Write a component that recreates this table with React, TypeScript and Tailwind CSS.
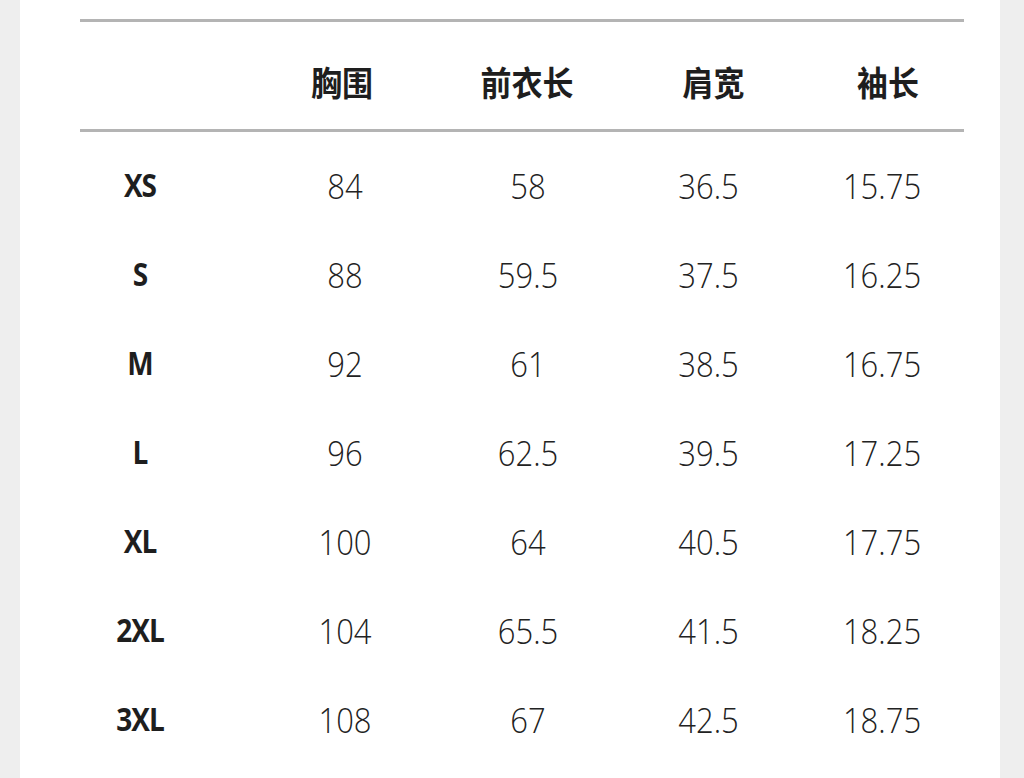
const COLS = [
  { key: 'size', w: 'w-[120px]' },
  { key: 'chest', w: 'w-[284px]' },
  { key: 'length', w: 'w-[86px]' },
  { key: 'shoulder', w: 'w-[287px]' },
  { key: 'sleeve', w: 'w-[62px]' },
];

const HEAD = ['', '胸围', '前衣长', '肩宽', '袖长'];

const ROWS: string[][] = [
  ['XS', '84', '58', '36.5', '15.75'],
  ['S', '88', '59.5', '37.5', '16.25'],
  ['M', '92', '61', '38.5', '16.75'],
  ['L', '96', '62.5', '39.5', '17.25'],
  ['XL', '100', '64', '40.5', '17.75'],
  ['2XL', '104', '65.5', '41.5', '18.25'],
  ['3XL', '108', '67', '42.5', '18.75'],
];

// number columns sit a little off the header centres in the picture
const NUM_SHIFT = ['', 'translate-x-[3px]', 'translate-x-[1px]', '-translate-x-[5px]', '-translate-x-[6px]'];

export default function App() {
  return (
    <div className="min-h-[778px] bg-[#eeeeee] flex">
      <div className="ml-[20px] w-[980px] h-[778px] bg-white pl-[60px] pt-[19px]">
        <div className="w-[884px]">
          <div className="h-[3px] bg-[#b4b4b4]" />

          {/* header */}
          <div className="flex h-[107px] items-center pt-[12px]">
            {COLS.map((c, i) => (
              <div key={c.key} className={`${c.w} flex justify-center whitespace-nowrap`}>
                <span className="text-[31px] font-bold text-[#1e1e1e] scale-y-110 leading-none"
                      style={{ fontFamily: '"Noto Sans CJK SC", sans-serif' }}>
                  {HEAD[i]}
                </span>
              </div>
            ))}
          </div>

          <div className="h-[3px] bg-[#b4b4b4]" />

          {/* rows */}
          <div className="pt-[10px]">
            {ROWS.map(r => (
              <div key={r[0]} className="flex h-[89px] items-center">
                {r.map((v, i) => (
                  <div key={i} className={`${COLS[i].w} flex justify-center whitespace-nowrap`}>
                    {i === 0 ? (
                      <span className="text-[28px] font-bold text-[#1e1e1e] scale-y-[1.15] leading-none -translate-y-[3px] tracking-[-1px]"
                            style={{ fontFamily: '"Open Sans", sans-serif' }}>
                        {v}
                      </span>
                    ) : (
                      <span className={`text-[31px] font-light text-[#222222] scale-y-[1.1] leading-none ${NUM_SHIFT[i]}`}
                            style={{ fontFamily: '"Open Sans", sans-serif' }}>
                        {v}
                      </span>
                    )}
                  </div>
                ))}
              </div>
            ))}
          </div>
        </div>
      </div>
    </div>
  );
}
